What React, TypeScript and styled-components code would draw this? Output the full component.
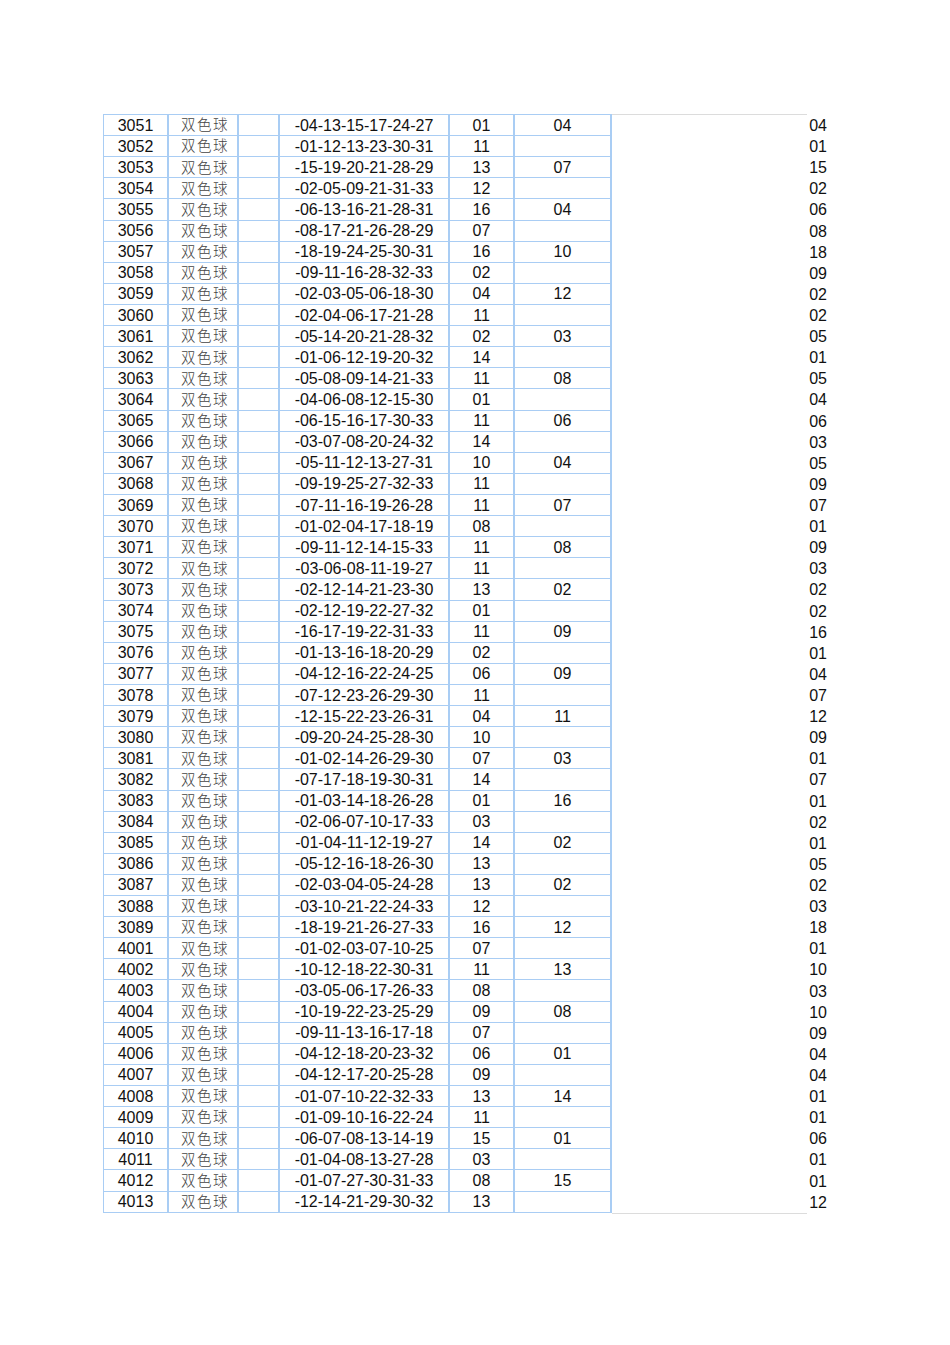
import React from "react";
import styled, { createGlobalStyle } from "styled-components";

const Global = createGlobalStyle`
  html, body { margin: 0; padding: 0; background: #fff; }
  body { font-family: "Liberation Sans", Arial, sans-serif; }
`;

const raw = `3051 -04-13-15-17-24-27 01 04 04
3052 -01-12-13-23-30-31 11 _ 01
3053 -15-19-20-21-28-29 13 07 15
3054 -02-05-09-21-31-33 12 _ 02
3055 -06-13-16-21-28-31 16 04 06
3056 -08-17-21-26-28-29 07 _ 08
3057 -18-19-24-25-30-31 16 10 18
3058 -09-11-16-28-32-33 02 _ 09
3059 -02-03-05-06-18-30 04 12 02
3060 -02-04-06-17-21-28 11 _ 02
3061 -05-14-20-21-28-32 02 03 05
3062 -01-06-12-19-20-32 14 _ 01
3063 -05-08-09-14-21-33 11 08 05
3064 -04-06-08-12-15-30 01 _ 04
3065 -06-15-16-17-30-33 11 06 06
3066 -03-07-08-20-24-32 14 _ 03
3067 -05-11-12-13-27-31 10 04 05
3068 -09-19-25-27-32-33 11 _ 09
3069 -07-11-16-19-26-28 11 07 07
3070 -01-02-04-17-18-19 08 _ 01
3071 -09-11-12-14-15-33 11 08 09
3072 -03-06-08-11-19-27 11 _ 03
3073 -02-12-14-21-23-30 13 02 02
3074 -02-12-19-22-27-32 01 _ 02
3075 -16-17-19-22-31-33 11 09 16
3076 -01-13-16-18-20-29 02 _ 01
3077 -04-12-16-22-24-25 06 09 04
3078 -07-12-23-26-29-30 11 _ 07
3079 -12-15-22-23-26-31 04 11 12
3080 -09-20-24-25-28-30 10 _ 09
3081 -01-02-14-26-29-30 07 03 01
3082 -07-17-18-19-30-31 14 _ 07
3083 -01-03-14-18-26-28 01 16 01
3084 -02-06-07-10-17-33 03 _ 02
3085 -01-04-11-12-19-27 14 02 01
3086 -05-12-16-18-26-30 13 _ 05
3087 -02-03-04-05-24-28 13 02 02
3088 -03-10-21-22-24-33 12 _ 03
3089 -18-19-21-26-27-33 16 12 18
4001 -01-02-03-07-10-25 07 _ 01
4002 -10-12-18-22-30-31 11 13 10
4003 -03-05-06-17-26-33 08 _ 03
4004 -10-19-22-23-25-29 09 08 10
4005 -09-11-13-16-17-18 07 _ 09
4006 -04-12-18-20-23-32 06 01 04
4007 -04-12-17-20-25-28 09 _ 04
4008 -01-07-10-22-32-33 13 14 01
4009 -01-09-10-16-22-24 11 _ 01
4010 -06-07-08-13-14-19 15 01 06
4011 -01-04-08-13-27-28 03 _ 01
4012 -01-07-27-30-31-33 08 15 01
4013 -12-14-21-29-30-32 13 _ 12`;

type Row = { id: string; nums: string; blue: string; extra: string; last: string };

const rows: Row[] = raw.split("\n").map((line) => {
  const [id, nums, blue, extra, last] = line.trim().split(/\s+/);
  return { id, nums, blue, extra: extra === "_" ? "" : extra, last };
});

const ROW_H = "21.115px";
const LINE = "#a9cdf4";

const Page = styled.div`
  padding: 114px 0 0 103px;
  display: flex;
  align-items: flex-start;
  height: 1231px;
`;

const Table = styled.div`
  display: grid;
  grid-template-columns: 65px 70px 41px 170px 65px 97px;
  grid-auto-rows: ${ROW_H};
  border-left: 1px solid ${LINE};
  border-top: 1px solid ${LINE};
  box-sizing: border-box;
`;

const Cell = styled.div<{ $cjk?: boolean }>`
  box-sizing: border-box;
  border-right: 2px solid ${LINE};
  border-bottom: 1px solid ${LINE};
  display: flex;
  align-items: center;
  justify-content: center;
  line-height: 1;
  font-size: ${(p) => (p.$cjk ? "14.5px" : "16px")};
  letter-spacing: ${(p) => (p.$cjk ? "1.5px" : "normal")};
  font-family: ${(p) =>
    p.$cjk
      ? `"Noto Sans CJK SC", "Noto Sans", sans-serif`
      : `"Liberation Sans", Arial, sans-serif`};
  font-weight: ${(p) => (p.$cjk ? 300 : 400)};
  color: ${(p) => (p.$cjk ? "#444" : "#111")};
  white-space: nowrap;
  padding: ${(p) => (p.$cjk ? "0 0 1px 4px" : "1px 0 0 0")};
`;

const Side = styled.div`
  width: 195px;
  border-top: 1px solid #dcdcdc;
  border-bottom: 1px solid #dcdcdc;
  display: grid;
  grid-auto-rows: ${ROW_H};
  box-sizing: border-box;
`;

const SideNum = styled.div`
  margin-right: -20px;
  font-size: 16px;
  line-height: 1;
  color: #111;
  display: flex;
  align-items: center;
  justify-content: flex-end;
  padding-top: 1px;
`;

export default function App() {
  return (
    <>
      <Global />
      <Page>
        <Table>
          {rows.map((r) => (
            <React.Fragment key={r.id}>
              <Cell>{r.id}</Cell>
              <Cell $cjk>双色球</Cell>
              <Cell />
              <Cell>{r.nums}</Cell>
              <Cell>{r.blue}</Cell>
              <Cell>{r.extra}</Cell>
            </React.Fragment>
          ))}
        </Table>
        <Side>
          {rows.map((r) => (
            <SideNum key={r.id}>{r.last}</SideNum>
          ))}
        </Side>
      </Page>
    </>
  );
}
